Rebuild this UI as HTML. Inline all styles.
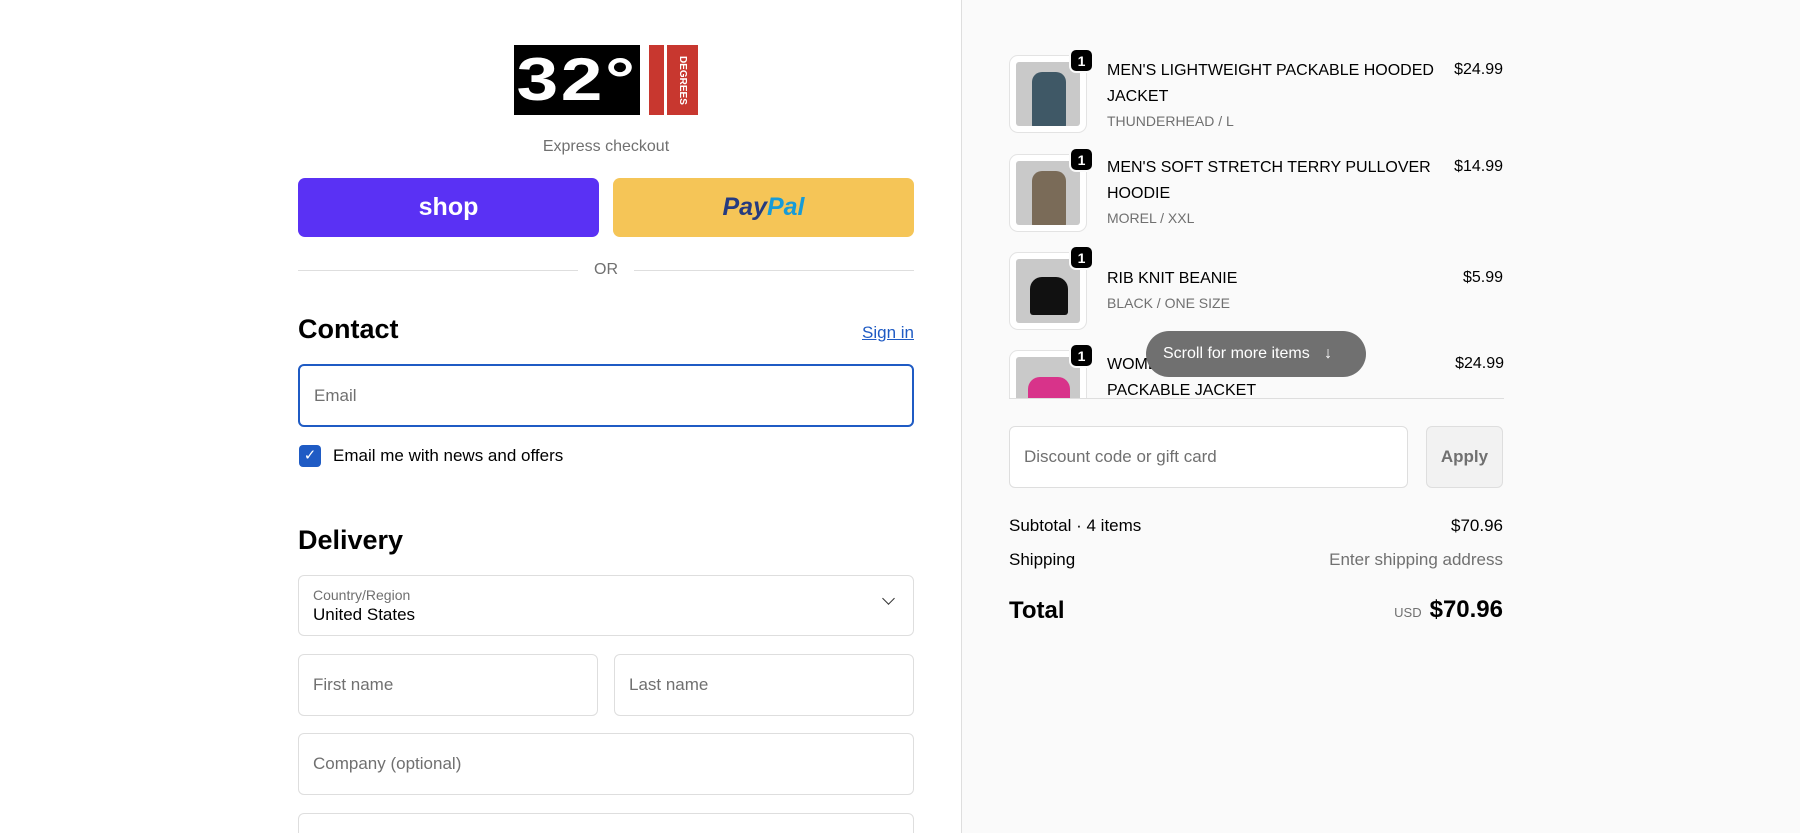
<!DOCTYPE html>
<html><head><meta charset="utf-8"><style>
*{box-sizing:border-box;margin:0;padding:0}
html,body{width:1800px;height:833px;overflow:hidden}
body{font-family:"Liberation Sans",Arial,sans-serif;color:#000;background:#fff}
#w{position:relative;width:1800px;height:833px;overflow:hidden}
.a{position:absolute}
.right{left:961px;top:0;width:839px;height:833px;background:#fafafa;border-left:1px solid #dedede}
.inp{position:absolute;border:1px solid #dedede;border-radius:6px;background:#fff;font-size:16px;color:#707070;padding-left:14px;display:flex;align-items:center}
.thumb{position:absolute;left:1009px;width:78px;height:78px;border:1px solid #e3e3e3;border-radius:9px;background:#fff;padding:6px}
.thumb .im{width:100%;height:100%;background:#c9c9c9;border-radius:3px;position:relative;overflow:hidden}
.badge{position:absolute;left:1069px;width:25px;height:25px;background:#000;color:#fff;border-radius:7px;border:2px solid #fafafa;font-size:14px;font-weight:bold;display:flex;align-items:center;justify-content:center}
.t{position:absolute;left:1107px;font-size:16px;line-height:26px;width:330px}
.v{color:#707070;font-size:14px}
.p{position:absolute;right:297px;font-size:16px}
</style></head><body><div id="w">
<!-- logo -->
<div class="a" style="left:514px;top:45px;width:126px;height:70px;background:#000"></div>
<div class="a" style="left:514px;top:45px;width:126px;height:70px;color:#fff;font-weight:bold;font-size:60px;line-height:70px;text-align:center;letter-spacing:2px;transform:scaleX(1.25)">32°</div>
<div class="a" style="left:649px;top:45px;width:15px;height:70px;background:#c8372f"></div>
<div class="a" style="left:667px;top:45px;width:31px;height:70px;background:#c8372f"></div>
<div class="a" style="left:670px;top:48px;width:25px;height:64px;color:#fff;font-size:10px;writing-mode:vertical-rl;text-align:center;line-height:25px;font-weight:bold">DEGREES</div>
<div class="a" style="left:298px;top:138px;width:616px;text-align:center;font-size:16px;color:#707070">Express checkout</div>
<div class="a" style="left:298px;top:178px;width:301px;height:59px;background:#5a31f4;border-radius:7px;color:#fff;font-weight:bold;font-size:25px;display:flex;align-items:center;justify-content:center">shop</div>
<div class="a" style="left:613px;top:178px;width:301px;height:59px;background:#f5c557;border-radius:7px;font-weight:bold;font-style:italic;font-size:25px;display:flex;align-items:center;justify-content:center"><span style="color:#253b80">Pay</span><span style="color:#179bd7">Pal</span></div>
<div class="a" style="left:298px;top:270px;width:280px;height:1px;background:#dedede"></div>
<div class="a" style="left:634px;top:270px;width:280px;height:1px;background:#dedede"></div>
<div class="a" style="left:578px;top:261px;width:56px;text-align:center;font-size:16px;color:#707070">OR</div>
<div class="a" style="left:298px;top:314px;font-size:27px;font-weight:bold">Contact</div>
<div class="a" style="left:862px;top:323px;font-size:17px;color:#1f5bc4;text-decoration:underline">Sign in</div>
<div class="inp" style="left:298px;top:364px;width:616px;height:63px;border:2px solid #1f5bc4;font-size:17px">Email</div>
<div class="a" style="left:299px;top:445px;width:22px;height:22px;background:#1f5bc4;border-radius:4px;color:#fff;font-size:15px;text-align:center;line-height:22px">✓</div>
<div class="a" style="left:333px;top:446px;font-size:17px">Email me with news and offers</div>
<div class="a" style="left:298px;top:525px;font-size:27px;font-weight:bold">Delivery</div>
<div class="inp" style="left:298px;top:575px;width:616px;height:61px;display:block;padding-top:11px"><div style="font-size:14px">Country/Region</div><div style="color:#000;font-size:17px;margin-top:2px">United States</div><div class="a" style="right:20px;top:18px;width:9px;height:9px;border-right:1.5px solid #333;border-bottom:1.5px solid #333;transform:rotate(45deg)"></div></div>
<div class="inp" style="left:298px;top:654px;width:300px;height:62px;font-size:17px">First name</div>
<div class="inp" style="left:614px;top:654px;width:300px;height:62px;font-size:17px">Last name</div>
<div class="inp" style="left:298px;top:733px;width:616px;height:62px;font-size:17px">Company (optional)</div>
<div class="inp" style="left:298px;top:813px;width:616px;height:40px"></div>

<div class="a right"></div>
<div class="thumb" style="top:55px"><div class="im"><div class="a" style="left:16px;top:10px;width:34px;height:55px;background:#3f5866;border-radius:10px 10px 2px 2px"></div></div></div>
<div class="badge" style="top:48px">1</div>
<div class="t" style="top:58px">MEN'S LIGHTWEIGHT PACKABLE HOODED JACKET<div class="v" style="line-height:22px">THUNDERHEAD / L</div></div>
<div class="p" style="top:61px">$24.99</div>
<div class="thumb" style="top:154px"><div class="im"><div class="a" style="left:16px;top:10px;width:34px;height:55px;background:#7a6b58;border-radius:10px 10px 2px 2px"></div></div></div>
<div class="badge" style="top:147px">1</div>
<div class="t" style="top:155px">MEN'S SOFT STRETCH TERRY PULLOVER HOODIE<div class="v" style="line-height:22px">MOREL / XXL</div></div>
<div class="p" style="top:158px">$14.99</div>
<div class="thumb" style="top:252px"><div class="im"><div class="a" style="left:14px;top:18px;width:38px;height:38px;background:#111;border-radius:12px 12px 3px 3px"></div></div></div>
<div class="badge" style="top:245px">1</div>
<div class="t" style="top:266px">RIB KNIT BEANIE<div class="v" style="line-height:22px">BLACK / ONE SIZE</div></div>
<div class="p" style="top:269px">$5.99</div>
<div class="a" style="left:1009px;top:342px;width:495px;height:56px;overflow:hidden">
<div class="thumb" style="left:0;top:8px"><div class="im"><div class="a" style="left:12px;top:20px;width:42px;height:50px;background:#d8338a;border-radius:12px"></div></div></div>
<div class="t" style="left:98px;top:10px">WOMEN'S LIGHTWEIGHT<br>PACKABLE JACKET</div>
<div class="p" style="right:0;top:13px">$24.99</div>
</div>
<div class="badge" style="top:343px">1</div>
<div class="a" style="left:1009px;top:398px;width:495px;height:1px;background:#dedede"></div>
<div class="a" style="left:1146px;top:331px;width:220px;height:46px;background:#707070;border-radius:23px;color:#fff;font-size:16px;line-height:46px;padding-left:17px">Scroll for more items <span style="margin-left:10px">↓</span></div>
<div class="inp" style="left:1009px;top:426px;width:399px;height:62px;font-size:17px">Discount code or gift card</div>
<div class="a" style="left:1426px;top:426px;width:77px;height:62px;border:1px solid #dedede;border-radius:6px;background:#f2f2f2;color:#707070;font-weight:bold;font-size:17px;text-align:center;line-height:60px">Apply</div>
<div class="a" style="left:1009px;top:516px;font-size:17px">Subtotal · 4 items</div>
<div class="a" style="right:297px;top:516px;font-size:17px">$70.96</div>
<div class="a" style="left:1009px;top:550px;font-size:17px">Shipping</div>
<div class="a" style="right:297px;top:550px;font-size:17px;color:#707070">Enter shipping address</div>
<div class="a" style="left:1009px;top:597px;font-size:24px;font-weight:bold">Total</div>
<div class="a" style="right:297px;top:596px;font-size:24px;font-weight:bold"><span style="font-size:13px;font-weight:normal;color:#707070;margin-right:8px">USD</span>$70.96</div>
</div></body></html>
